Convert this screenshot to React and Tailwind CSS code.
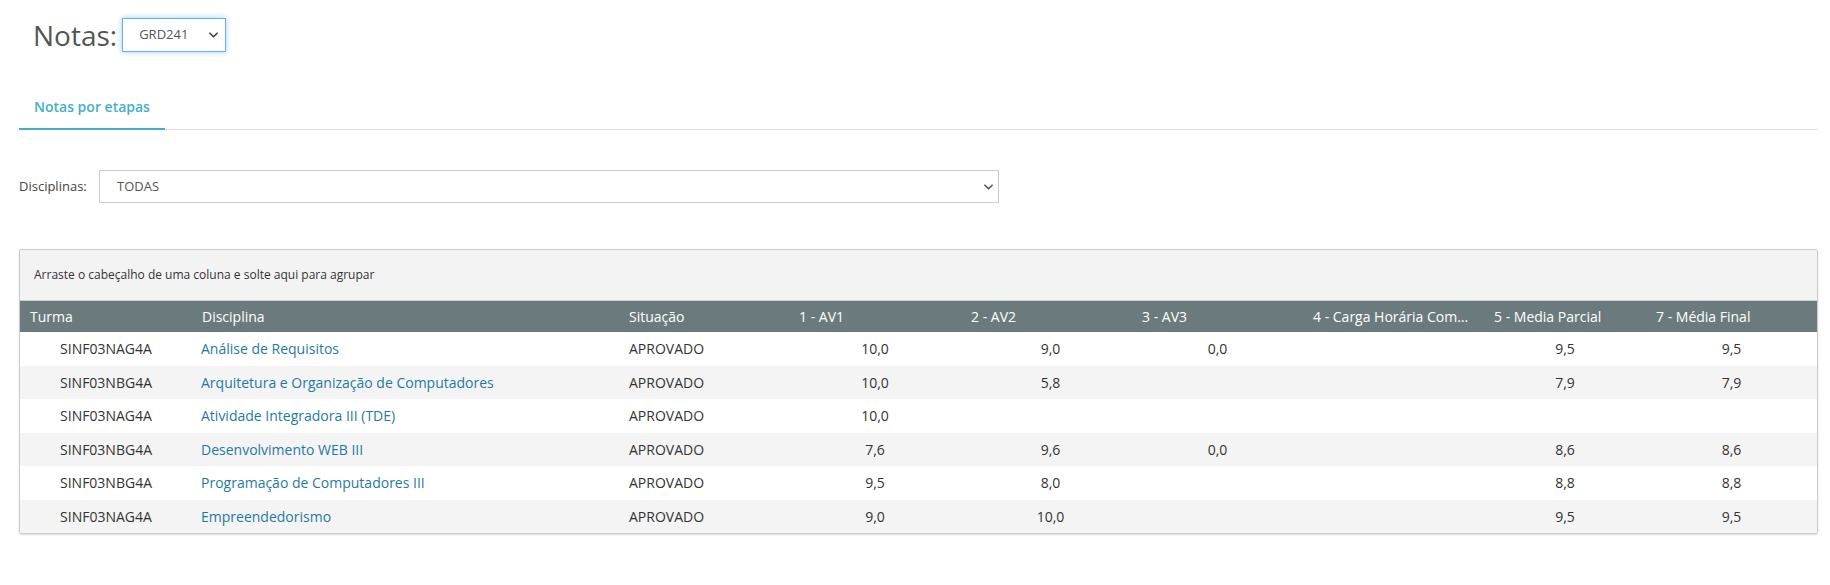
import React from "react";

const rows = [
  { turma: "SINF03NAG4A", disc: "Análise de Requisitos", sit: "APROVADO", av1: "10,0", av2: "9,0", av3: "0,0", ch: "", mp: "9,5", mf: "9,5" },
  { turma: "SINF03NBG4A", disc: "Arquitetura e Organização de Computadores", sit: "APROVADO", av1: "10,0", av2: "5,8", av3: "", ch: "", mp: "7,9", mf: "7,9" },
  { turma: "SINF03NAG4A", disc: "Atividade Integradora III (TDE)", sit: "APROVADO", av1: "10,0", av2: "", av3: "", ch: "", mp: "", mf: "" },
  { turma: "SINF03NBG4A", disc: "Desenvolvimento WEB III", sit: "APROVADO", av1: "7,6", av2: "9,6", av3: "0,0", ch: "", mp: "8,6", mf: "8,6" },
  { turma: "SINF03NBG4A", disc: "Programação de Computadores III", sit: "APROVADO", av1: "9,5", av2: "8,0", av3: "", ch: "", mp: "8,8", mf: "8,8" },
  { turma: "SINF03NAG4A", disc: "Empreendedorismo", sit: "APROVADO", av1: "9,0", av2: "10,0", av3: "", ch: "", mp: "9,5", mf: "9,5" },
];

const cols = "grid grid-cols-[172px_427px_170px_172px_171px_171px_181px_162px_1fr]";

const Chevron = ({ className }) => (
  <svg viewBox="0 0 10 6" className={className} fill="none" stroke="currentColor" strokeWidth="1.8" strokeLinecap="round" strokeLinejoin="round">
    <polyline points="1,1 5,5 9,1" />
  </svg>
);

const App = () => {
  return (
    <div className="w-[1830px] h-[585px] bg-white pl-[19px] pr-[12px] font-['Open_Sans',sans-serif] text-[#333]">
      {/* title */}
      <div className="flex items-center h-[34px] mt-[18px] pl-[14px]">
        <h1 className="text-[28px] leading-none text-[#555] font-normal">Notas:</h1>
        <div className="ml-[5px] w-[104px] h-[34px] border border-[#66afe9] shadow-[0_0_6px_rgba(102,175,233,0.6)] flex items-center justify-between pl-[16px] pr-[7px] text-[13px] text-[#555]">
          <span>GRD241</span>
          <Chevron className="w-[9px] h-[6px] text-[#444]" />
        </div>
      </div>

      {/* tabs */}
      <div className="mt-[44px] border-b border-[#ddd] flex">
        <div className="px-[15px] pb-[11px] border-b-2 border-[#45aecb] -mb-px text-[14px] font-semibold text-[#45aecb]">
          Notas por etapas
        </div>
      </div>

      {/* filtro */}
      <div className="mt-[40px] flex items-center">
        <span className="w-[80px] text-[13px] text-[#444]">Disciplinas:</span>
        <div className="w-[900px] h-[33px] border border-[#ccc] flex items-center justify-between pl-[17px] pr-[5px] text-[13px] text-[#555]">
          <span>TODAS</span>
          <Chevron className="w-[9px] h-[6px] text-[#555]" />
        </div>
      </div>

      {/* grid */}
      <div className="mt-[46px] border border-[#ccc] rounded-[2px] shadow-[0_1px_2px_rgba(0,0,0,0.15)] overflow-hidden text-[14px]">
        <div className="h-[51px] bg-[#f3f3f3] border-b border-[#ccc] flex items-center pl-[14px] text-[12px] text-[#333]">
          Arraste o cabeçalho de uma coluna e solte aqui para agrupar
        </div>
        <div className={`${cols} h-[31px] bg-[#6b7b7d] text-white items-center`}>
          <div className="pl-[10px]">Turma</div>
          <div className="pl-[10px]">Disciplina</div>
          <div className="pl-[10px]">Situação</div>
          <div className="pl-[10px]">1 - AV1</div>
          <div className="pl-[10px]">2 - AV2</div>
          <div className="pl-[10px]">3 - AV3</div>
          <div className="pl-[10px] whitespace-nowrap">4 - Carga Horária Com…</div>
          <div className="pl-[10px]">5 - Media Parcial</div>
          <div className="pl-[10px]">7 - Média Final</div>
        </div>
        {rows.map((r, i) => (
          <div key={i} className={`${cols} h-[33.5px] items-center ${i % 2 === 1 ? "bg-[#f4f4f4]" : "bg-white"}`}>
            <div className="text-center">{r.turma}</div>
            <div className="pl-[9px] text-[#1f7aa3]">{r.disc}</div>
            <div className="pl-[10px]">{r.sit}</div>
            <div className="text-center">{r.av1}</div>
            <div className="text-center pl-[8px]">{r.av2}</div>
            <div className="text-center">{r.av3}</div>
            <div className="text-center">{r.ch}</div>
            <div className="text-center">{r.mp}</div>
            <div className="text-center">{r.mf}</div>
          </div>
        ))}
      </div>
    </div>
  );
};

export default App;
